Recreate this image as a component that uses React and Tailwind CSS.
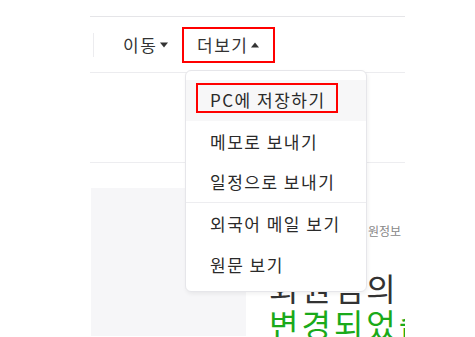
import React from 'react';

const menuItems = [
  { label: 'PC에 저장하기', active: true },
  { label: '메모로 보내기' },
  { label: '일정으로 보내기', divider: true },
  { label: '외국어 메일 보기' },
  { label: '원문 보기' },
];

const Caret = ({ up }) => (
  <svg width="8" height="6" viewBox="0 0 8 6" className="ml-[3px]">
    {up ? <path d="M0 5.5 L4 0.5 L8 5.5 Z" fill="#333" /> : <path d="M0 0.5 L8 0.5 L4 5.5 Z" fill="#333" />}
  </svg>
);

export default function App() {
  return (
    <div
      className="relative w-[475px] h-[337px] bg-white overflow-hidden"
      style={{ fontFamily: '"Noto Sans CJK KR", "Noto Sans", sans-serif' }}
    >
      <div className="relative ml-[90px] w-[315px] h-full overflow-hidden">
        {/* top rule */}
        <div className="h-[16px]" />
        <div className="h-px bg-[#e5e5e8]" />

        {/* toolbar */}
        <div className="flex items-center h-[56px] border-b border-[#ececef]">
          <div className="ml-[3px] w-px h-[24px] bg-[#ececef] shrink-0" />
          <button className="ml-[29px] w-[59px] shrink-0 flex items-center text-[17px] tracking-[1.5px] text-[#333] leading-none">
            이동<Caret />
          </button>
          <div className="flex items-center shrink-0 h-[36px] w-[93px] border-2 border-[#ff0000] pl-[13px]">
            <span className="flex items-center text-[17px] tracking-[1.5px] text-[#333] leading-none">
              더보기<Caret up />
            </span>
          </div>
        </div>

        <div className="h-[90px] border-b border-[#ededf0]" />
        <div className="h-[25px]" />

        {/* body */}
        <div className="flex h-[148px]">
          <div className="w-[155px] ml-px shrink-0 bg-[#f6f6f8]" />
          <div className="flex-1 min-w-0 pl-[23px] pt-[34px] whitespace-nowrap">
            <p className="pl-[88px] text-[12px] leading-[18px] text-[#888]">회원정보</p>
            <p className="mt-[29px] text-[32px] tracking-[3px] leading-[36px] text-[#333]">회원님의</p>
            <p className="text-[32px] tracking-[3px] leading-[36px] text-[#1aaa1a]">변경되었습니다</p>
          </div>
        </div>

        {/* dropdown */}
        <div className="absolute left-[95px] top-[70px] w-[182px] h-[222px] bg-white border border-[#e6e6ea] rounded-[6px] shadow-[1px_2px_4px_rgba(0,0,0,0.06)] pt-[9px]">
          {menuItems.map((item) => (
            <div
              key={item.label}
              className={
                (item.active ? 'bg-[#f7f7f8] ' : '') +
                (item.divider ? 'border-b border-[#ededf0] ' : '') +
                'relative flex items-center h-[41px] pl-[24px] text-[17px] tracking-[1.5px] text-[#2a2a2a] whitespace-nowrap'
              }
            >
              {item.active && (
                <div className="absolute left-[10px] top-[3px] w-[142px] h-[30px] border-2 border-[#ff0000]" />
              )}
              <span className={item.active ? '-mt-[2px]' : ''}>{item.label}</span>
            </div>
          ))}
        </div>
      </div>
    </div>
  );
}
